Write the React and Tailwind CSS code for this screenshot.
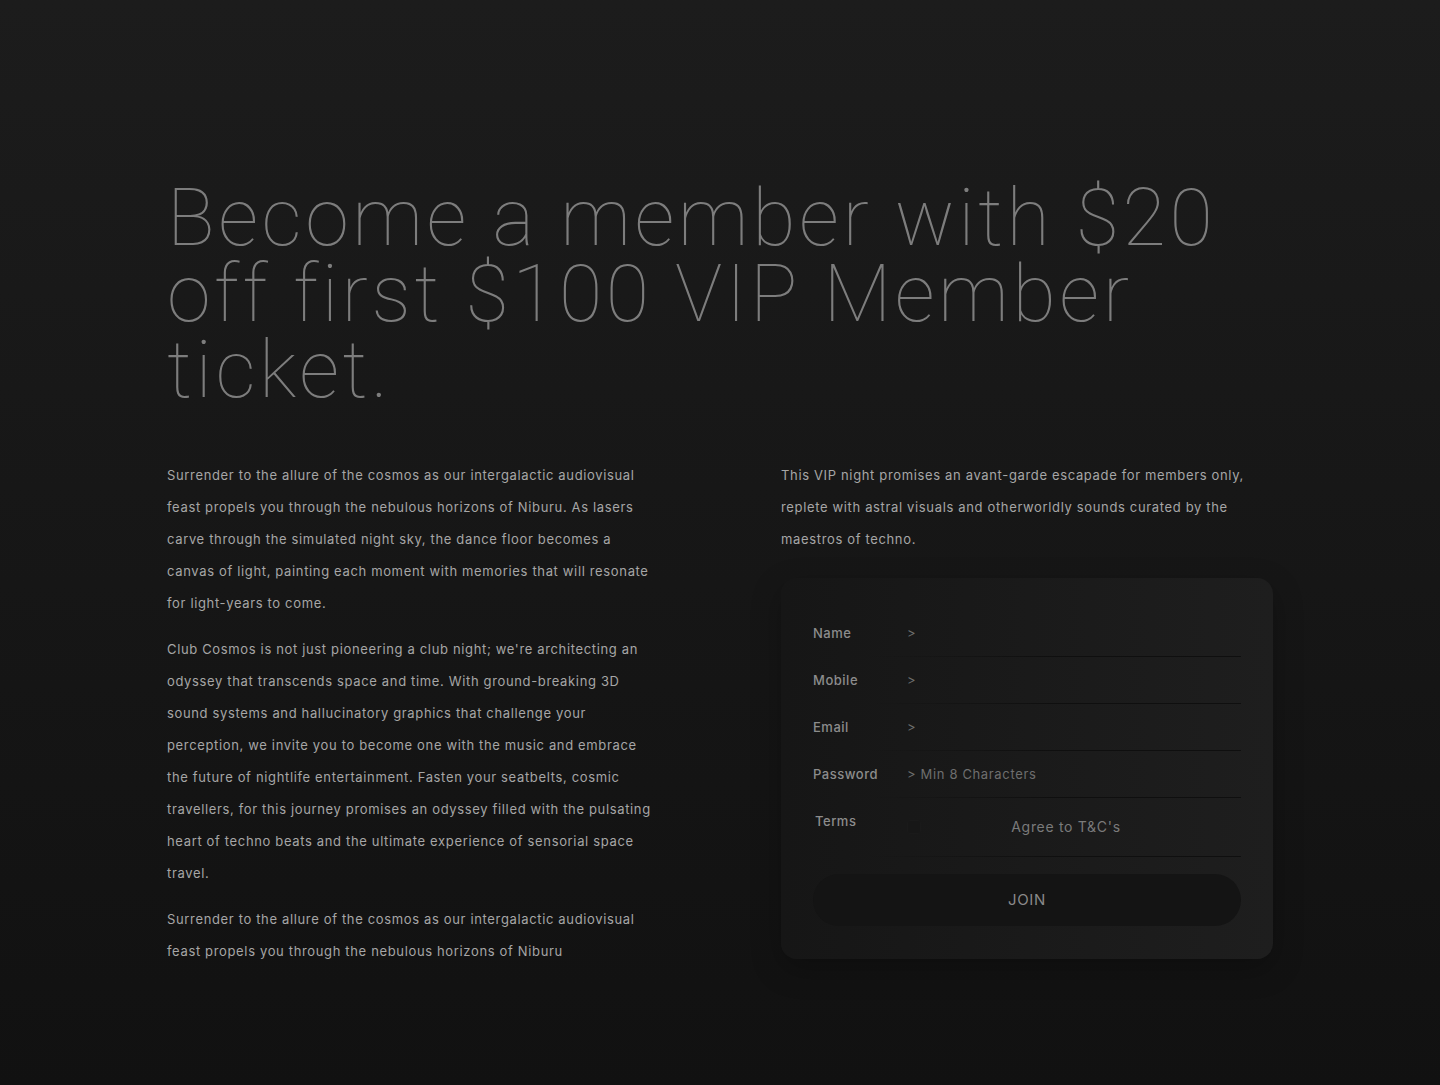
import { useState } from 'react';

const fields = [
  { label: 'Name', placeholder: '>' },
  { label: 'Mobile', placeholder: '>' },
  { label: 'Email', placeholder: '>' },
  { label: 'Password', placeholder: '> Min 8 Characters' },
];

function Field({ label, placeholder }) {
  return (
    <div className="flex flex-col">
      <div className="flex h-[46px] items-center pt-[2px]">
        <label className="w-[94px] shrink-0 text-[13px] font-medium tracking-[0.04em] text-[#8c8c8c]">{label}</label>
        <input
          type="text"
          placeholder={placeholder}
          className="flex-1 bg-transparent text-[13px] tracking-[0.05em] text-[#9a9a9a] outline-none placeholder:text-[#6e6e6e]"
        />
      </div>
      <div className="ml-[54px] h-px bg-gradient-to-r from-transparent via-[#0f0f0f] to-[#0f0f0f]" />
    </div>
  );
}

export default function App() {
  const [agree, setAgree] = useState(false);

  return (
    <div className="min-h-[1085px] w-full bg-gradient-to-b from-[#1c1c1c] to-[#111111] font-['Inter',sans-serif]">
      <div className="mx-auto w-[1106px] pt-[180px] pb-[120px]">
        {/* Heading */}
        <h1 className="font-['Roboto',sans-serif] text-[79px] font-thin leading-[76px] tracking-[0.045em] text-[#7d7d7d]">
          Become a member with $20 off first $100 VIP Member ticket.
        </h1>

        <div className="mt-[51px] grid grid-cols-[490px_492px] justify-between">
          {/* Left copy */}
          <div className="flex flex-col gap-[14px] text-[13px] leading-[32px] tracking-[0.05em] text-[#a6a6a6]">
            <p>
              Surrender to the allure of the cosmos as our intergalactic audiovisual feast propels you through the nebulous horizons of Niburu. As lasers carve through the simulated night sky, the dance floor becomes a canvas of light, painting each moment with memories that will resonate for light-years to come.
            </p>
            <p>
              Club Cosmos is not just pioneering a club night; we're architecting an odyssey that transcends space and time. With ground-breaking 3D sound systems and hallucinatory graphics that challenge your perception, we invite you to become one with the music and embrace the future of nightlife entertainment. Fasten your seatbelts, cosmic travellers, for this journey promises an odyssey filled with the pulsating heart of techno beats and the ultimate experience of sensorial space travel.
            </p>
            <p>
              Surrender to the allure of the cosmos as our intergalactic audiovisual feast propels you through the nebulous horizons of Niburu
            </p>
          </div>

          {/* Right column */}
          <div className="flex flex-col gap-[23px]">
            <p className="text-[13px] leading-[32px] tracking-[0.05em] text-[#a6a6a6]">
              This VIP night promises an avant-garde escapade for members only, replete with astral visuals and otherworldly sounds curated by the maestros of techno.
            </p>

            <form
              className="rounded-[16px] bg-gradient-to-r from-[#161616] to-[#1e1e1e] px-[32px] pt-[32px] pb-[33px] shadow-[0_10px_30px_rgba(0,0,0,0.25)]"
              onSubmit={(e) => e.preventDefault()}
            >
              {fields.map((f) => (
                <Field key={f.label} {...f} />
              ))}

              {/* Terms */}
              <div className="flex flex-col">
                <div className="flex h-[58px] items-start pt-[14px]">
                  <span className="w-[94px] shrink-0 pl-[2px] text-[13px] font-medium tracking-[0.04em] text-[#8c8c8c]">Terms</span>
                  <div className="mt-[4px] flex flex-1 items-center">
                    <button
                      type="button"
                      onClick={() => setAgree(!agree)}
                      className="h-[14px] w-[14px] shrink-0 rounded-[3px] border border-[#1a1a1a] bg-[#171717]"
                    />
                    <span className="flex-1 pr-[30px] text-center text-[14px] tracking-[0.05em] text-[#7a7a7a]">
                      Agree to T&amp;C's
                    </span>
                  </div>
                </div>
                <div className="ml-[54px] h-px bg-gradient-to-r from-transparent via-[#0f0f0f] to-[#0f0f0f]" />
              </div>

              <button
                type="submit"
                className="mt-[17px] flex h-[52px] w-full items-center justify-center rounded-full bg-[#141414] text-[15px] tracking-[0.04em] text-[#8a8a8a]"
              >
                JOIN
              </button>
            </form>
          </div>
        </div>
      </div>
    </div>
  );
}
